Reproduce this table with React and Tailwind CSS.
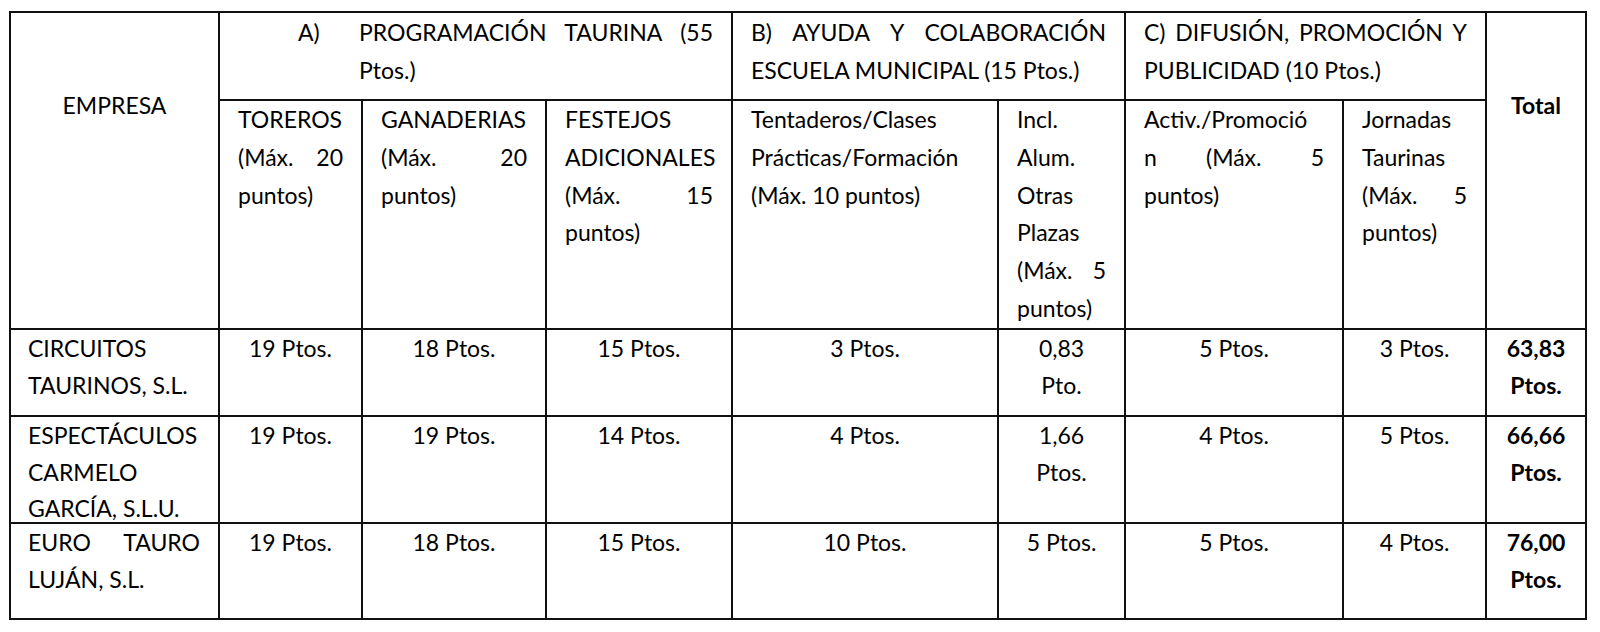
import React from "react";

// one line of text spread edge to edge, like a justified Word line
const Spread = ({ words }) => (
  <div className="flex justify-between">
    {words.map((w, i) => (
      <span key={i}>{w}</span>
    ))}
  </div>
);

const Lines = ({ lines }) =>
  lines.map((l, i) =>
    Array.isArray(l) ? <Spread key={i} words={l} /> : <div key={i}>{l}</div>
  );

const subHeaders = [
  ["TOREROS", ["(Máx.", "20"], "puntos)"],
  ["GANADERIAS", ["(Máx.", "20"], "puntos)"],
  ["FESTEJOS", "ADICIONALES", ["(Máx.", "15"], "puntos)"],
  ["Tentaderos/Clases", "Prácticas/Formación", "(Máx. 10 puntos)"],
  ["Incl.", "Alum.", "Otras", "Plazas", ["(Máx.", "5"], "puntos)"],
  ["Activ./Promoció", ["n", "(Máx.", "5"], "puntos)"],
  ["Jornadas", "Taurinas", ["(Máx.", "5"], "puntos)"],
];

const rows = [
  {
    empresa: ["CIRCUITOS", "TAURINOS, S.L."],
    values: [["19 Ptos."], ["18 Ptos."], ["15 Ptos."], ["3 Ptos."], ["0,83", "Pto."], ["5 Ptos."], ["3 Ptos."]],
    total: ["63,83", "Ptos."],
  },
  {
    empresa: ["ESPECTÁCULOS", "CARMELO", "GARCÍA, S.L.U."],
    values: [["19 Ptos."], ["19 Ptos."], ["14 Ptos."], ["4 Ptos."], ["1,66", "Ptos."], ["4 Ptos."], ["5 Ptos."]],
    total: ["66,66", "Ptos."],
  },
  {
    empresa: [["EURO", "TAURO"], "LUJÁN, S.L."],
    values: [["19 Ptos."], ["18 Ptos."], ["15 Ptos."], ["10 Ptos."], ["5 Ptos."], ["5 Ptos."], ["4 Ptos."]],
    total: ["76,00", "Ptos."],
  },
];

const App = () => {
  return (
    <div className="w-[1600px] h-[632px] bg-white font-[Lato,sans-serif] text-[23px] text-black">
      <div className="pt-[11px] pl-[9px]">
        <div className="grid w-max bg-[#111] p-[2px] gap-[2px] grid-cols-[207px_141px_182px_184px_264px_125px_216px_141px_98px] grid-rows-[86px_227px_85px_105px_94px]">
          {/* header, first level */}
          <div className="row-span-2 bg-white pt-[73px] text-center leading-[38px]">
            EMPRESA
          </div>
          <div className="col-span-3 bg-white pl-[78px] pr-[18px] leading-[38.4px] flex">
            <span className="w-[61px] shrink-0">A)</span>
            <div className="flex-1">
              <Spread words={["PROGRAMACIÓN", "TAURINA", "(55"]} />
              <div>Ptos.)</div>
            </div>
          </div>
          <div className="col-span-2 bg-white px-[18px] leading-[38.4px]">
            <Spread words={["B)", "AYUDA", "Y", "COLABORACIÓN"]} />
            <div>ESCUELA MUNICIPAL (15 Ptos.)</div>
          </div>
          <div className="col-span-2 bg-white px-[18px] leading-[38.4px]">
            <Spread words={["C)", "DIFUSIÓN,", "PROMOCIÓN", "Y"]} />
            <div>PUBLICIDAD (10 Ptos.)</div>
          </div>
          <div className="row-span-2 bg-white pt-[73px] text-center font-bold leading-[38px]">
            Total
          </div>

          {/* header, second level */}
          {subHeaders.map((lines, i) => (
            <div key={i} className="bg-white px-[18px] leading-[37.8px]">
              <Lines lines={lines} />
            </div>
          ))}

          {/* data */}
          {rows.map((r) => (
            <React.Fragment key={r.total[0]}>
              <div className="bg-white pl-[17px] pr-[18px] leading-[36.5px]">
                <Lines lines={r.empresa} />
              </div>
              {r.values.map((v, i) => (
                <div key={i} className="bg-white px-[8px] text-center leading-[36.5px]">
                  <Lines lines={v} />
                </div>
              ))}
              <div className="bg-white text-center font-bold leading-[36.5px]">
                <Lines lines={r.total} />
              </div>
            </React.Fragment>
          ))}
        </div>
      </div>
    </div>
  );
};

export default App;
